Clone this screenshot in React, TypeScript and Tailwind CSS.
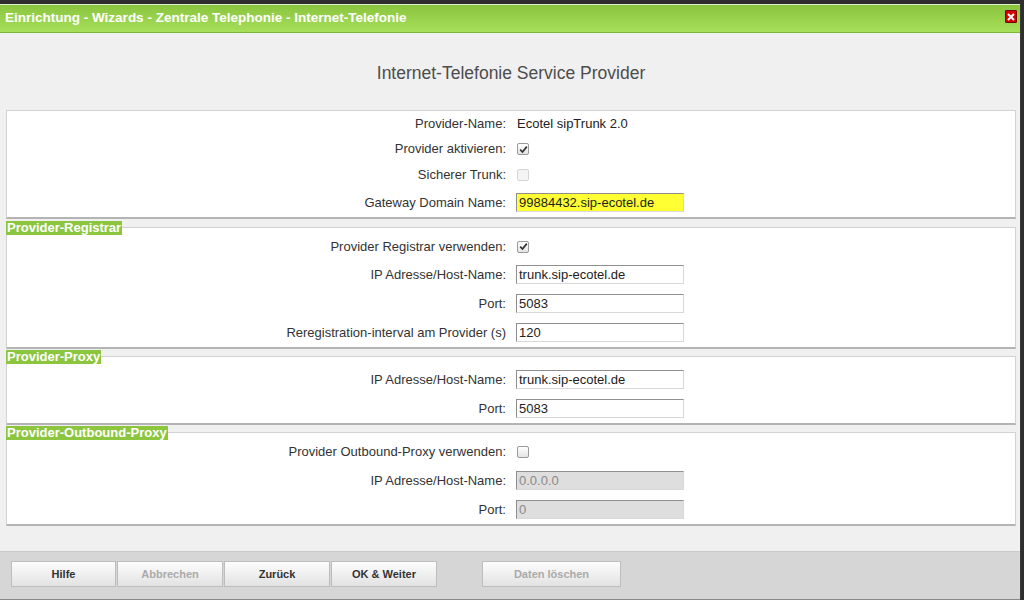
import type { ReactNode } from "react";

function Check({ checked, disabled }: { checked?: boolean; disabled?: boolean }) {
  return (
    <span
      className={`ml-[1px] flex h-[12px] w-[12px] items-center justify-center rounded-[2px] border ${
        disabled
          ? "border-[#d4d4d4] bg-[#f4f4f4]"
          : "border-[#9a9a9a] bg-gradient-to-b from-[#ffffff] to-[#e4e4e4]"
      }`}
    >
      {checked && (
        <svg width="9" height="9" viewBox="0 0 9 9">
          <path d="M1.2 4.6 L3.5 7 L7.8 1.6" fill="none" stroke="#333" strokeWidth="1.7" />
        </svg>
      )}
    </span>
  );
}

function Field({
  value,
  disabled,
  highlight,
}: {
  value: string;
  disabled?: boolean;
  highlight?: boolean;
}) {
  return (
    <div
      className={`flex h-[19px] w-[168px] items-center border border-t-[#8f8f8f] border-l-[#8f8f8f] border-r-[#d8d8d8] border-b-[#d8d8d8] pl-[2px] text-[13px] ${
        disabled
          ? "bg-[#dedede] text-[#8a8a8a]"
          : highlight
            ? "bg-[#ffff33] text-[#222]"
            : "bg-white text-[#222]"
      }`}
    >
      {value}
    </div>
  );
}

function Row({ label, h, children }: { label: string; h: string; children: ReactNode }) {
  return (
    <div className={`flex items-center ${h}`}>
      <div className="w-[499px] text-right text-[13px] text-[#333]">{label}</div>
      <div className="ml-[10px] flex items-center">{children}</div>
    </div>
  );
}

function Panel({ title, children, pad }: { title?: string; children: ReactNode; pad: string }) {
  return (
    <div
      className={`relative border border-[#d2d2d2] border-b-2 border-b-[#b4b4b4] bg-white ${pad}`}
    >
      {title && (
        <div className="absolute -left-px -top-[7px] bg-[#8cc63f] px-[1px] text-[13px] font-bold leading-[14px] text-white">
          {title}
        </div>
      )}
      {children}
    </div>
  );
}

function Btn({ label, disabled, w }: { label: string; disabled?: boolean; w: string }) {
  return (
    <div
      className={`flex h-[26px] ${w} items-center justify-center border border-[#bdbdbd] bg-gradient-to-b from-[#fdfdfd] to-[#e2e2e2] text-[11px] font-bold ${
        disabled ? "text-[#aaa]" : "text-[#333]"
      }`}
    >
      {label}
    </div>
  );
}

export default function App() {
  return (
    <div className="flex h-[600px] w-[1024px] flex-col overflow-hidden bg-[#2e2e2e] font-['Liberation_Sans',Arial,sans-serif]">
      <div className="h-[4px] shrink-0" />
      <div className="flex w-[1021px] flex-1 flex-col border-r border-[#3a3a3a] bg-[#f0f0f0]">
        {/* title bar */}
        <div className="flex h-[29px] shrink-0 items-center justify-between border-t border-[#dff0c8] border-b border-b-[#7db53a] bg-gradient-to-b from-[#8bc540] to-[#a6e05a] pl-[5px] pr-[3px]">
          <span className="text-[13.5px] font-bold text-white">
            Einrichtung - Wizards - Zentrale Telephonie - Internet-Telefonie
          </span>
          <span className="mb-[4px] flex h-[13px] w-[12px] items-center justify-center rounded-[1px] border border-[#7a0000] bg-[#d40000]">
            <svg width="8" height="8" viewBox="0 0 8 8">
              <path d="M1 1 L7 7 M7 1 L1 7" stroke="white" strokeWidth="2" />
            </svg>
          </span>
        </div>

        <div className="flex flex-1 flex-col pl-[6px] pr-[4px]">
          <div className="h-[77px] pt-[30px] text-center text-[17.5px] leading-[20px] text-[#4d4d4d]">
            Internet-Telefonie Service Provider
          </div>

          <Panel pad="pt-0 pb-0">
            <Row label="Provider-Name:" h="h-[26px]">
              <span className="pl-[1px] text-[13px] text-[#222]">Ecotel sipTrunk 2.0</span>
            </Row>
            <Row label="Provider aktivieren:" h="h-[24px]">
              <Check checked />
            </Row>
            <Row label="Sicherer Trunk:" h="h-[27px]">
              <Check disabled />
            </Row>
            <Row label="Gateway Domain Name:" h="h-[29px]">
              <Field value="99884432.sip-ecotel.de" highlight />
            </Row>
          </Panel>

          <div className="mt-[8px]">
            <Panel title="Provider-Registrar" pad="pt-[5px] pb-0">
              <Row label="Provider Registrar verwenden:" h="h-[27px]">
                <Check checked />
              </Row>
              <Row label="IP Adresse/Host-Name:" h="h-[29px]">
                <Field value="trunk.sip-ecotel.de" />
              </Row>
              <Row label="Port:" h="h-[29px]">
                <Field value="5083" />
              </Row>
              <Row label="Reregistration-interval am Provider (s)" h="h-[29px]">
                <Field value="120" />
              </Row>
            </Panel>
          </div>

          <div className="mt-[7px]">
            <Panel title="Provider-Proxy" pad="pt-[8px] pb-0">
              <Row label="IP Adresse/Host-Name:" h="h-[29px]">
                <Field value="trunk.sip-ecotel.de" />
              </Row>
              <Row label="Port:" h="h-[29px]">
                <Field value="5083" />
              </Row>
            </Panel>
          </div>

          <div className="mt-[7px]">
            <Panel title="Provider-Outbound-Proxy" pad="pt-[4px] pb-0">
              <Row label="Provider Outbound-Proxy verwenden:" h="h-[29px]">
                <Check />
              </Row>
              <Row label="IP Adresse/Host-Name:" h="h-[29px]">
                <Field value="0.0.0.0" disabled />
              </Row>
              <Row label="Port:" h="h-[29px]">
                <Field value="0" disabled />
              </Row>
            </Panel>
          </div>
        </div>

        {/* footer */}
        <div className="flex h-[49px] shrink-0 items-start border-t border-[#c9c9c9] border-b border-b-[#8a8a8a] bg-[#d6d6d6] pl-[11px] pt-[9px]">
          <div className="flex gap-[1px]">
            <Btn label="Hilfe" w="w-[105px]" />
            <Btn label="Abbrechen" w="w-[106px]" disabled />
            <Btn label="Zurück" w="w-[106px]" />
            <Btn label="OK & Weiter" w="w-[106px]" />
          </div>
          <div className="ml-[45px]">
            <Btn label="Daten löschen" w="w-[139px]" disabled />
          </div>
        </div>
      </div>
    </div>
  );
}
